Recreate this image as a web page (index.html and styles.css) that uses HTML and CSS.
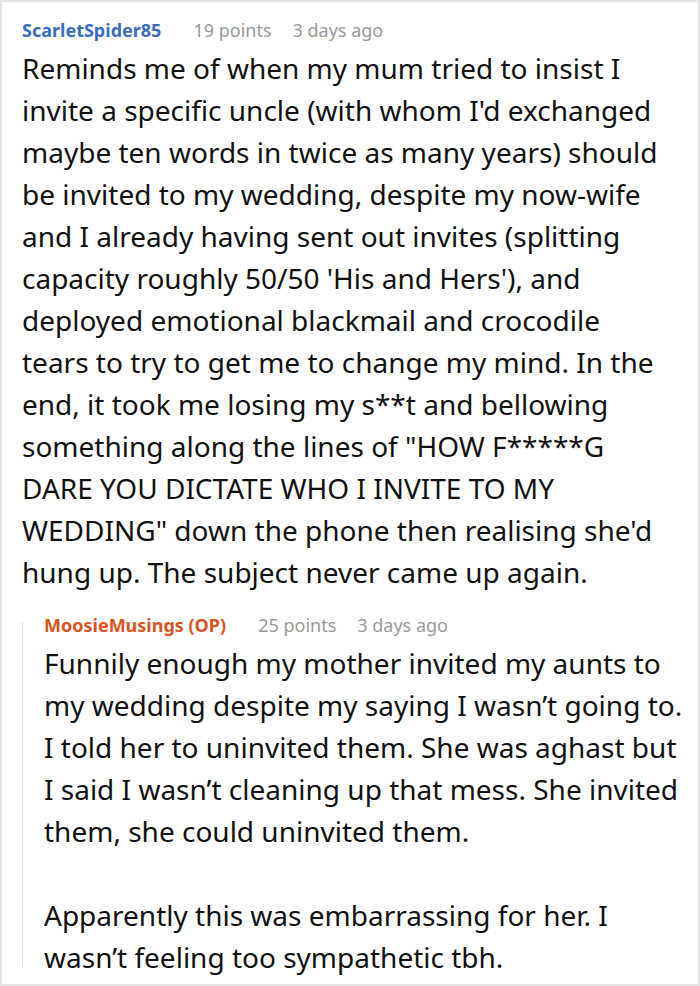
FILE: index.html
```html
<!DOCTYPE html>
<html>
<head>
<meta charset="utf-8">
<link rel="stylesheet" href="styles.css">
</head>
<body>
<div class="thread">
  <div class="comment">
    <div class="meta">
      <span class="author author-blue">ScarletSpider85</span>
      <span class="points">19 points</span>
      <span class="time">3 days ago</span>
    </div>
    <div class="text">
      <p>Reminds me of when my mum tried to insist I invite a specific uncle (with whom I'd exchanged maybe ten words in twice as many years) should be invited to my wedding, despite my now-wife and I already having sent out invites (splitting capacity roughly 50/50 'His and Hers'), and deployed emotional blackmail and crocodile tears to try to get me to change my mind. In the end, it took me losing my s**t and bellowing something along the lines of "HOW F*****G DARE YOU DICTATE WHO I INVITE TO MY WEDDING" down the phone then realising she'd hung up. The subject never came up again.</p>
    </div>
    <div class="reply">
      <div class="meta">
        <span class="author author-op">MoosieMusings (OP)</span>
        <span class="points">25 points</span>
        <span class="time">3 days ago</span>
      </div>
      <div class="text">
        <p>Funnily enough my mother invited my aunts to my wedding despite my saying I wasn’t going to. I told her to uninvited them. She was aghast but I said I wasn’t cleaning up that mess. She invited them, she could uninvited them.</p>
        <p>Apparently this was embarrassing for her. I wasn’t feeling too sympathetic tbh.</p>
      </div>
    </div>
  </div>
</div>
</body>
</html>
```
FILE: styles.css
```css
html, body {
  margin: 0;
  padding: 0;
  background: #fff;
}
.thread {
  width: 700px;
  height: 986px;
  box-sizing: border-box;
  border: 2px solid #e4e4e4;
  font-family: "Noto Sans", "Open Sans", sans-serif;
  color: #111;
  overflow: hidden;
}
.comment {
  padding: 16px 36px 0 20px;
}
.meta {
  display: flex;
  align-items: baseline;
  font-size: 18px;
  line-height: 24px;
  white-space: nowrap;
}
.author {
  font-weight: 700;
  margin-right: 32px;
}
.author-blue { color: #3a6cc0; }
.author-op { color: #d9541e; }
.points {
  color: #999;
  margin-right: 21px;
}
.time {
  color: #999;
}
.text {
  font-size: 28px;
  line-height: 42px;
  margin-top: 5px;
}
.text p {
  margin: 0;
}
.text p + p {
  margin-top: 42px;
}
.reply {
  position: relative;
  margin-top: 20px;
  margin-right: -30px;
  padding-left: 22px;
}
.reply .text {
  margin-top: 5px;
}
.reply::before {
  content: "";
  position: absolute;
  left: 0;
  top: 9px;
  bottom: 11px;
  width: 1px;
  background: #dcdcdc;
}
```
